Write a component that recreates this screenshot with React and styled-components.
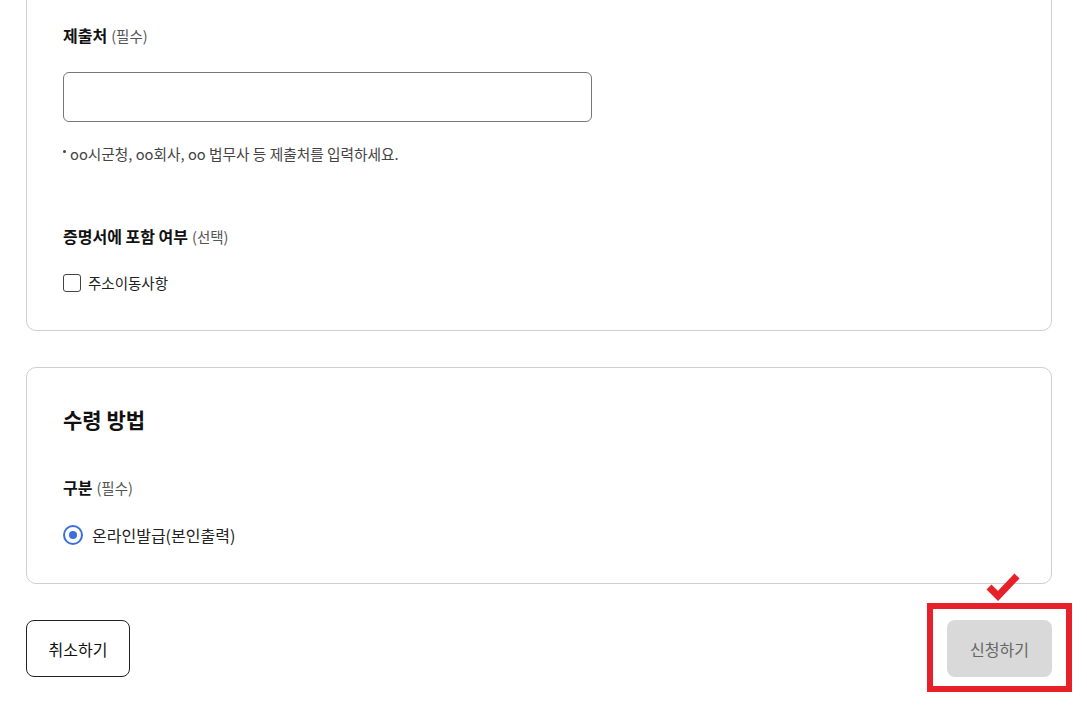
import React, { useState } from "react";
import styled, { createGlobalStyle } from "styled-components";

const GlobalStyle = createGlobalStyle`
  html, body {
    margin: 0;
    padding: 0;
    background: #ffffff;
    font-family: "Noto Sans CJK KR", "Noto Sans", sans-serif;
    color: #111111;
  }
`;

const Page = styled.div`
  width: 1026px;
  margin-left: 26px;
  padding-bottom: 35px;
  display: flex;
  flex-direction: column;
  gap: 36px;
`;

const Card = styled.section`
  border: 1px solid #cfcfcf;
  border-radius: 10px;
  padding: ${(p) => p.$pad || "36px"} 36px ${(p) => p.$bottom || "36px"};
  display: flex;
  flex-direction: column;
  margin-top: ${(p) => p.$offset || "0"};
`;

const SectionTitle = styled.h2`
  margin: 0;
  font-size: 21px;
  font-weight: 700;
  line-height: 30px;
  color: #111;
`;

const Label = styled.div`
  font-size: 16px;
  font-weight: 700;
  line-height: 24px;
  margin-top: ${(p) => p.$top || "0"};
  color: #111;
`;

const Sub = styled.span`
  font-size: 14.5px;
  font-weight: 400;
  color: #555;
  margin-left: 4px;
`;

const TextBox = styled.input`
  width: 529px;
  height: 50px;
  box-sizing: border-box;
  margin-top: 24px;
  border: 1px solid #777;
  border-radius: 6px;
  padding: 0 14px;
  font-size: 15px;
  outline: none;
`;

const Hint = styled.p`
  margin: 22px 0 0;
  font-size: 14.7px;
  line-height: 20px;
  color: #444;
  display: flex;
  align-items: center;
  gap: 4px;

  &::before {
    content: "";
    width: 3px;
    height: 3px;
    border-radius: 50%;
    background: #444;
    margin-bottom: 5px;
  }
`;

const OptionRow = styled.label`
  margin-top: ${(p) => p.$top || "22px"};
  display: flex;
  align-items: center;
  gap: ${(p) => p.$gap || "7px"};
  font-size: ${(p) => p.$size || "14.5px"};
  line-height: 24px;
  color: #222;
  cursor: pointer;
`;

const CheckBox = styled.span`
  width: 18px;
  height: 18px;
  box-sizing: border-box;
  border: 1.5px solid #444;
  border-radius: 3px;
  background: #fff;
`;

const Radio = styled.span`
  width: 20px;
  height: 20px;
  box-sizing: border-box;
  border: 2px solid #3b6fe0;
  border-radius: 50%;
  display: flex;
  align-items: center;
  justify-content: center;

  &::after {
    content: "";
    width: 8px;
    height: 8px;
    border-radius: 50%;
    background: #3b6fe0;
  }
`;

const Actions = styled.div`
  display: flex;
  justify-content: space-between;
  align-items: center;
`;

const Button = styled.button`
  display: block;
  width: ${(p) => p.$w || "104px"};
  height: 57px;
  box-sizing: border-box;
  border-radius: 8px;
  font-family: inherit;
  font-size: 16px;
  border: ${(p) => (p.$disabled ? "none" : "1px solid #222")};
  background: ${(p) => (p.$disabled ? "#d9d9d9" : "#fff")};
  color: ${(p) => (p.$disabled ? "#666" : "#111")};
  cursor: pointer;
`;

const Marked = styled.div`
  position: relative;
`;

const RedBox = styled.div`
  position: absolute;
  left: -20px;
  right: -20px;
  top: -17px;
  bottom: -15px;
  border: 6px solid #e8202a;
  pointer-events: none;
`;

const Tick = styled.svg`
  position: absolute;
  left: 38px;
  top: -47px;
  width: 36px;
  height: 30px;
`;

export default function App() {
  const [addr, setAddr] = useState(false);

  return (
    <>
      <GlobalStyle />
      <Page>
        <Card $offset="-20px" $pad="42px" $bottom="35px">
          <Label>
            제출처<Sub>(필수)</Sub>
          </Label>
          <TextBox />
          <Hint>oo시군청, oo회사, oo 법무사 등 제출처를 입력하세요.</Hint>
          <Label $top="60px">
            증명서에 포함 여부<Sub>(선택)</Sub>
          </Label>
          <OptionRow onClick={() => setAddr(!addr)}>
            <CheckBox />
            주소이동사항
          </OptionRow>
        </Card>

        <Card $pad="36px">
          <SectionTitle>수령 방법</SectionTitle>
          <Label $top="41px">
            구분<Sub>(필수)</Sub>
          </Label>
          <OptionRow $top="23px" $gap="9px" $size="16px">
            <Radio />
            온라인발급(본인출력)
          </OptionRow>
        </Card>

        <Actions>
          <Button>취소하기</Button>
          <Marked>
            <Button $disabled $w="105px">신청하기</Button>
            <RedBox />
            <Tick viewBox="0 0 36 30">
              <polyline
                points="4,14 13,23 32,3"
                fill="none"
                stroke="#e8202a"
                strokeWidth="7"
              />
            </Tick>
          </Marked>
        </Actions>
      </Page>
    </>
  );
}
